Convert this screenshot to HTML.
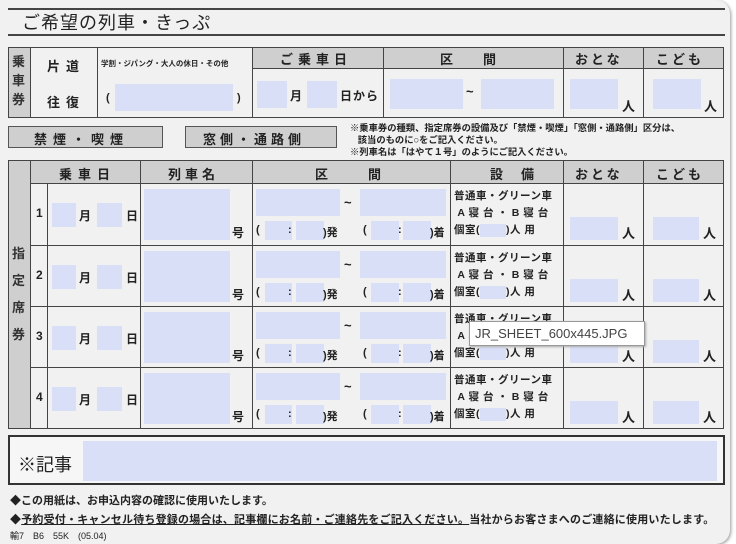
<!DOCTYPE html><html><head><meta charset="utf-8"><style>
*{margin:0;padding:0;box-sizing:border-box}
body{width:736px;height:544px;background:#fff;font-family:"Liberation Sans","Noto Sans CJK JP",sans-serif;color:#222;position:relative;overflow:hidden}
.card{position:absolute;left:0;top:0;width:730px;height:544px;background:#f1f1f1;border-radius:0 14px 14px 0;box-shadow:1px 1px 3px #999}
.a{position:absolute}
.b{position:absolute;background:#d9dff6}
.g{background:#cfcfcf}
.t{position:absolute;font-weight:bold;white-space:nowrap}
.bx{position:absolute;border:1.5px solid #444}
.hl{position:absolute;height:0;border-top:1.5px solid #444}
.vl{position:absolute;width:0;border-left:1.5px solid #444}
.row{position:absolute;left:30px;width:693px;height:61px}
.eq{letter-spacing:0.5px}
</style></head><body><div class="card">
<div class="hl" style="left:8px;top:8px;width:717px;border-top-width:2px"></div>
<div class="t" style="left:22px;top:9px;font-size:18px;font-weight:normal;letter-spacing:1px">ご希望の列車・きっぷ</div>
<div class="hl" style="left:8px;top:34px;width:717px;border-top-width:2px"></div>

<div class="a g" style="left:8px;top:47px;width:22px;height:70px"></div>
<div class="a g" style="left:252px;top:47px;width:471px;height:21px"></div>
<div class="bx" style="left:8px;top:47px;width:716px;height:71px"></div>
<div class="vl" style="left:30px;top:47px;height:70px"></div>
<div class="vl" style="left:97px;top:47px;height:70px"></div>
<div class="vl" style="left:252px;top:47px;height:70px"></div>
<div class="vl" style="left:383px;top:47px;height:70px"></div>
<div class="vl" style="left:563px;top:47px;height:70px"></div>
<div class="vl" style="left:643px;top:47px;height:70px"></div>
<div class="hl" style="left:252px;top:68px;width:471px"></div>
<div class="t" style="left:12px;top:52px;font-size:13px;line-height:19px;width:14px;color:#333">乗<br>車<br>券</div>
<div class="t" style="left:47px;top:56px;font-size:13px;letter-spacing:6px">片道</div>
<div class="t" style="left:47px;top:92px;font-size:13px;letter-spacing:6px">往復</div>
<div class="t" style="left:101px;top:58px;font-size:7.5px">学割・ジパング・大人の休日・その他</div>
<div class="t" style="left:106px;top:92px;font-size:11px">(</div>
<div class="b" style="left:115px;top:84px;width:118px;height:27px"></div>
<div class="t" style="left:237px;top:92px;font-size:11px">)</div>
<div class="t" style="left:280px;top:49px;font-size:13px;letter-spacing:5px">ご乗車日</div>
<div class="t" style="left:440px;top:49px;font-size:13px;letter-spacing:30px">区間</div>
<div class="t" style="left:575px;top:49px;font-size:13px;letter-spacing:3px">おとな</div>
<div class="t" style="left:656px;top:49px;font-size:13px;letter-spacing:3px">こども</div>
<div class="b" style="left:257px;top:81px;width:30px;height:27px"></div>
<div class="t" style="left:290px;top:87px;font-size:12px">月</div>
<div class="b" style="left:307px;top:81px;width:30px;height:27px"></div>
<div class="t" style="left:340px;top:87px;font-size:12px;letter-spacing:1px">日から</div>
<div class="b" style="left:390px;top:79px;width:73px;height:30px"></div>
<div class="t" style="left:466px;top:84px;font-size:13px">~</div>
<div class="b" style="left:481px;top:79px;width:73px;height:30px"></div>
<div class="b" style="left:570px;top:79px;width:48px;height:30px"></div>
<div class="t" style="left:622px;top:96px;font-size:13px">人</div>
<div class="b" style="left:653px;top:79px;width:48px;height:30px"></div>
<div class="t" style="left:704px;top:96px;font-size:13px">人</div>

<div class="a g" style="left:8px;top:126px;width:155px;height:22px;border:1.5px solid #555"></div>
<div class="t" style="left:34px;top:129px;font-size:13px;letter-spacing:6px">禁煙・喫煙</div>
<div class="a g" style="left:185px;top:126px;width:152px;height:22px;border:1.5px solid #555"></div>
<div class="t" style="left:203px;top:129px;font-size:13px;letter-spacing:4px">窓側・通路側</div>
<div class="t" style="left:350px;top:122px;font-size:9.3px;line-height:12px">※乗車券の種類、指定席券の設備及び「禁煙・喫煙」「窓側・通路側」区分は、<br>&nbsp;&nbsp;&nbsp;該当のものに○をご記入ください。<br>※列車名は「はやて１号」のようにご記入ください。</div>

<div class="a g" style="left:8px;top:160px;width:22px;height:268px"></div>
<div class="a g" style="left:30px;top:160px;width:693px;height:23px"></div>
<div class="bx" style="left:8px;top:160px;width:716px;height:269px"></div>
<div class="vl" style="left:30px;top:160px;height:268px"></div>
<div class="vl" style="left:47px;top:183px;height:245px"></div>
<div class="vl" style="left:140px;top:160px;height:268px"></div>
<div class="vl" style="left:252px;top:160px;height:268px"></div>
<div class="vl" style="left:450px;top:160px;height:268px"></div>
<div class="vl" style="left:563px;top:160px;height:268px"></div>
<div class="vl" style="left:643px;top:160px;height:268px"></div>
<div class="hl" style="left:30px;top:183px;width:693px"></div>
<div class="hl" style="left:30px;top:245px;width:693px"></div>
<div class="hl" style="left:30px;top:306px;width:693px"></div>
<div class="hl" style="left:30px;top:367px;width:693px"></div>
<div class="t" style="left:59px;top:164px;font-size:13px;letter-spacing:6px">乗車日</div>
<div class="t" style="left:168px;top:164px;font-size:13px;letter-spacing:4px">列車名</div>
<div class="t" style="left:315px;top:164px;font-size:13px;letter-spacing:40px">区間</div>
<div class="t" style="left:490px;top:164px;font-size:13px;letter-spacing:18px">設備</div>
<div class="t" style="left:575px;top:164px;font-size:13px;letter-spacing:3px">おとな</div>
<div class="t" style="left:656px;top:164px;font-size:13px;letter-spacing:3px">こども</div>
<div class="t" style="left:12px;top:240px;font-size:13px;line-height:27px;width:14px;color:#333">指<br>定<br>席<br>券</div>

<div class="row" style="top:183px"><div class="t" style="left:6px;top:23px;font-size:12px">1</div>
<div class="b" style="left:22px;top:20px;width:24px;height:24px"></div><div class="t" style="left:49px;top:24px;font-size:12px">月</div>
<div class="b" style="left:67px;top:20px;width:25px;height:24px"></div><div class="t" style="left:96px;top:24px;font-size:12px">日</div>
<div class="b" style="left:114px;top:6px;width:86px;height:51px"></div><div class="t" style="left:202px;top:41px;font-size:12px">号</div>
<div class="b" style="left:226px;top:6px;width:84px;height:27px"></div><div class="t" style="left:314px;top:12px;font-size:13px">~</div>
<div class="b" style="left:330px;top:6px;width:86px;height:27px"></div>
<div class="t" style="left:226px;top:41px;font-size:11px">(</div><div class="b" style="left:235px;top:38px;width:27px;height:19px"></div><div class="t" style="left:258px;top:41px;font-size:11px">:</div><div class="b" style="left:266px;top:38px;width:28px;height:19px"></div><div class="t" style="left:293px;top:41px;font-size:11px">)発</div>
<div class="t" style="left:333px;top:41px;font-size:11px">(</div><div class="b" style="left:341px;top:38px;width:28px;height:19px"></div><div class="t" style="left:368px;top:41px;font-size:11px">:</div><div class="b" style="left:373px;top:38px;width:28px;height:19px"></div><div class="t" style="left:400px;top:41px;font-size:11px">)着</div>
<div class="t eq" style="left:424px;top:5px;font-size:10.5px;line-height:17px">普通車・グリーン車<br>&nbsp;A 寝 台 ・ B 寝 台<br>個室(<span style="display:inline-block;width:26px;height:13px;background:#d9dff6;vertical-align:middle"></span>)人 用</div>
<div class="b" style="left:540px;top:34px;width:48px;height:23px"></div><div class="t" style="left:592px;top:40px;font-size:13px">人</div>
<div class="b" style="left:623px;top:34px;width:46px;height:23px"></div><div class="t" style="left:673px;top:40px;font-size:13px">人</div></div>

<div class="row" style="top:245px"><div class="t" style="left:6px;top:23px;font-size:12px">2</div>
<div class="b" style="left:22px;top:20px;width:24px;height:24px"></div><div class="t" style="left:49px;top:24px;font-size:12px">月</div>
<div class="b" style="left:67px;top:20px;width:25px;height:24px"></div><div class="t" style="left:96px;top:24px;font-size:12px">日</div>
<div class="b" style="left:114px;top:6px;width:86px;height:51px"></div><div class="t" style="left:202px;top:41px;font-size:12px">号</div>
<div class="b" style="left:226px;top:6px;width:84px;height:27px"></div><div class="t" style="left:314px;top:12px;font-size:13px">~</div>
<div class="b" style="left:330px;top:6px;width:86px;height:27px"></div>
<div class="t" style="left:226px;top:41px;font-size:11px">(</div><div class="b" style="left:235px;top:38px;width:27px;height:19px"></div><div class="t" style="left:258px;top:41px;font-size:11px">:</div><div class="b" style="left:266px;top:38px;width:28px;height:19px"></div><div class="t" style="left:293px;top:41px;font-size:11px">)発</div>
<div class="t" style="left:333px;top:41px;font-size:11px">(</div><div class="b" style="left:341px;top:38px;width:28px;height:19px"></div><div class="t" style="left:368px;top:41px;font-size:11px">:</div><div class="b" style="left:373px;top:38px;width:28px;height:19px"></div><div class="t" style="left:400px;top:41px;font-size:11px">)着</div>
<div class="t eq" style="left:424px;top:5px;font-size:10.5px;line-height:17px">普通車・グリーン車<br>&nbsp;A 寝 台 ・ B 寝 台<br>個室(<span style="display:inline-block;width:26px;height:13px;background:#d9dff6;vertical-align:middle"></span>)人 用</div>
<div class="b" style="left:540px;top:34px;width:48px;height:23px"></div><div class="t" style="left:592px;top:40px;font-size:13px">人</div>
<div class="b" style="left:623px;top:34px;width:46px;height:23px"></div><div class="t" style="left:673px;top:40px;font-size:13px">人</div></div>

<div class="row" style="top:306px"><div class="t" style="left:6px;top:23px;font-size:12px">3</div>
<div class="b" style="left:22px;top:20px;width:24px;height:24px"></div><div class="t" style="left:49px;top:24px;font-size:12px">月</div>
<div class="b" style="left:67px;top:20px;width:25px;height:24px"></div><div class="t" style="left:96px;top:24px;font-size:12px">日</div>
<div class="b" style="left:114px;top:6px;width:86px;height:51px"></div><div class="t" style="left:202px;top:41px;font-size:12px">号</div>
<div class="b" style="left:226px;top:6px;width:84px;height:27px"></div><div class="t" style="left:314px;top:12px;font-size:13px">~</div>
<div class="b" style="left:330px;top:6px;width:86px;height:27px"></div>
<div class="t" style="left:226px;top:41px;font-size:11px">(</div><div class="b" style="left:235px;top:38px;width:27px;height:19px"></div><div class="t" style="left:258px;top:41px;font-size:11px">:</div><div class="b" style="left:266px;top:38px;width:28px;height:19px"></div><div class="t" style="left:293px;top:41px;font-size:11px">)発</div>
<div class="t" style="left:333px;top:41px;font-size:11px">(</div><div class="b" style="left:341px;top:38px;width:28px;height:19px"></div><div class="t" style="left:368px;top:41px;font-size:11px">:</div><div class="b" style="left:373px;top:38px;width:28px;height:19px"></div><div class="t" style="left:400px;top:41px;font-size:11px">)着</div>
<div class="t eq" style="left:424px;top:5px;font-size:10.5px;line-height:17px">普通車・グリーン車<br>&nbsp;A 寝 台 ・ B 寝 台<br>個室(<span style="display:inline-block;width:26px;height:13px;background:#d9dff6;vertical-align:middle"></span>)人 用</div>
<div class="b" style="left:540px;top:34px;width:48px;height:23px"></div><div class="t" style="left:592px;top:40px;font-size:13px">人</div>
<div class="b" style="left:623px;top:34px;width:46px;height:23px"></div><div class="t" style="left:673px;top:40px;font-size:13px">人</div></div>

<div class="row" style="top:367px"><div class="t" style="left:6px;top:23px;font-size:12px">4</div>
<div class="b" style="left:22px;top:20px;width:24px;height:24px"></div><div class="t" style="left:49px;top:24px;font-size:12px">月</div>
<div class="b" style="left:67px;top:20px;width:25px;height:24px"></div><div class="t" style="left:96px;top:24px;font-size:12px">日</div>
<div class="b" style="left:114px;top:6px;width:86px;height:51px"></div><div class="t" style="left:202px;top:41px;font-size:12px">号</div>
<div class="b" style="left:226px;top:6px;width:84px;height:27px"></div><div class="t" style="left:314px;top:12px;font-size:13px">~</div>
<div class="b" style="left:330px;top:6px;width:86px;height:27px"></div>
<div class="t" style="left:226px;top:41px;font-size:11px">(</div><div class="b" style="left:235px;top:38px;width:27px;height:19px"></div><div class="t" style="left:258px;top:41px;font-size:11px">:</div><div class="b" style="left:266px;top:38px;width:28px;height:19px"></div><div class="t" style="left:293px;top:41px;font-size:11px">)発</div>
<div class="t" style="left:333px;top:41px;font-size:11px">(</div><div class="b" style="left:341px;top:38px;width:28px;height:19px"></div><div class="t" style="left:368px;top:41px;font-size:11px">:</div><div class="b" style="left:373px;top:38px;width:28px;height:19px"></div><div class="t" style="left:400px;top:41px;font-size:11px">)着</div>
<div class="t eq" style="left:424px;top:5px;font-size:10.5px;line-height:17px">普通車・グリーン車<br>&nbsp;A 寝 台 ・ B 寝 台<br>個室(<span style="display:inline-block;width:26px;height:13px;background:#d9dff6;vertical-align:middle"></span>)人 用</div>
<div class="b" style="left:540px;top:34px;width:48px;height:23px"></div><div class="t" style="left:592px;top:40px;font-size:13px">人</div>
<div class="b" style="left:623px;top:34px;width:46px;height:23px"></div><div class="t" style="left:673px;top:40px;font-size:13px">人</div></div>

<div class="a" style="left:469px;top:321px;width:176px;height:25px;background:#fff;border:1px solid #999;box-shadow:1px 1px 2px #aaa;font-size:13px;color:#444;padding:4px 0 0 5px;white-space:nowrap">JR_SHEET_600x445.JPG</div>

<div class="a" style="left:8px;top:435px;width:717px;height:50px;border:2px solid #333;background:#f6f6f6"></div>
<div class="t" style="left:18px;top:451px;font-size:18px;font-weight:normal">※記事</div>
<div class="b" style="left:83px;top:441px;width:634px;height:40px"></div>

<div class="t" style="left:10px;top:492px;font-size:11px">◆この用紙は、お申込内容の確認に使用いたします。</div>
<div class="t" style="left:10px;top:511px;font-size:11px;letter-spacing:0.2px">◆<span style="text-decoration:underline">予約受付・キャンセル待ち登録の場合は、記事欄にお名前・ご連絡先をご記入ください。</span>当社からお客さまへのご連絡に使用いたします。</div>
<div class="t" style="left:10px;top:529px;font-size:9px;font-weight:normal">輸7　B6　55K　(05.04)</div>
</div></body></html>
